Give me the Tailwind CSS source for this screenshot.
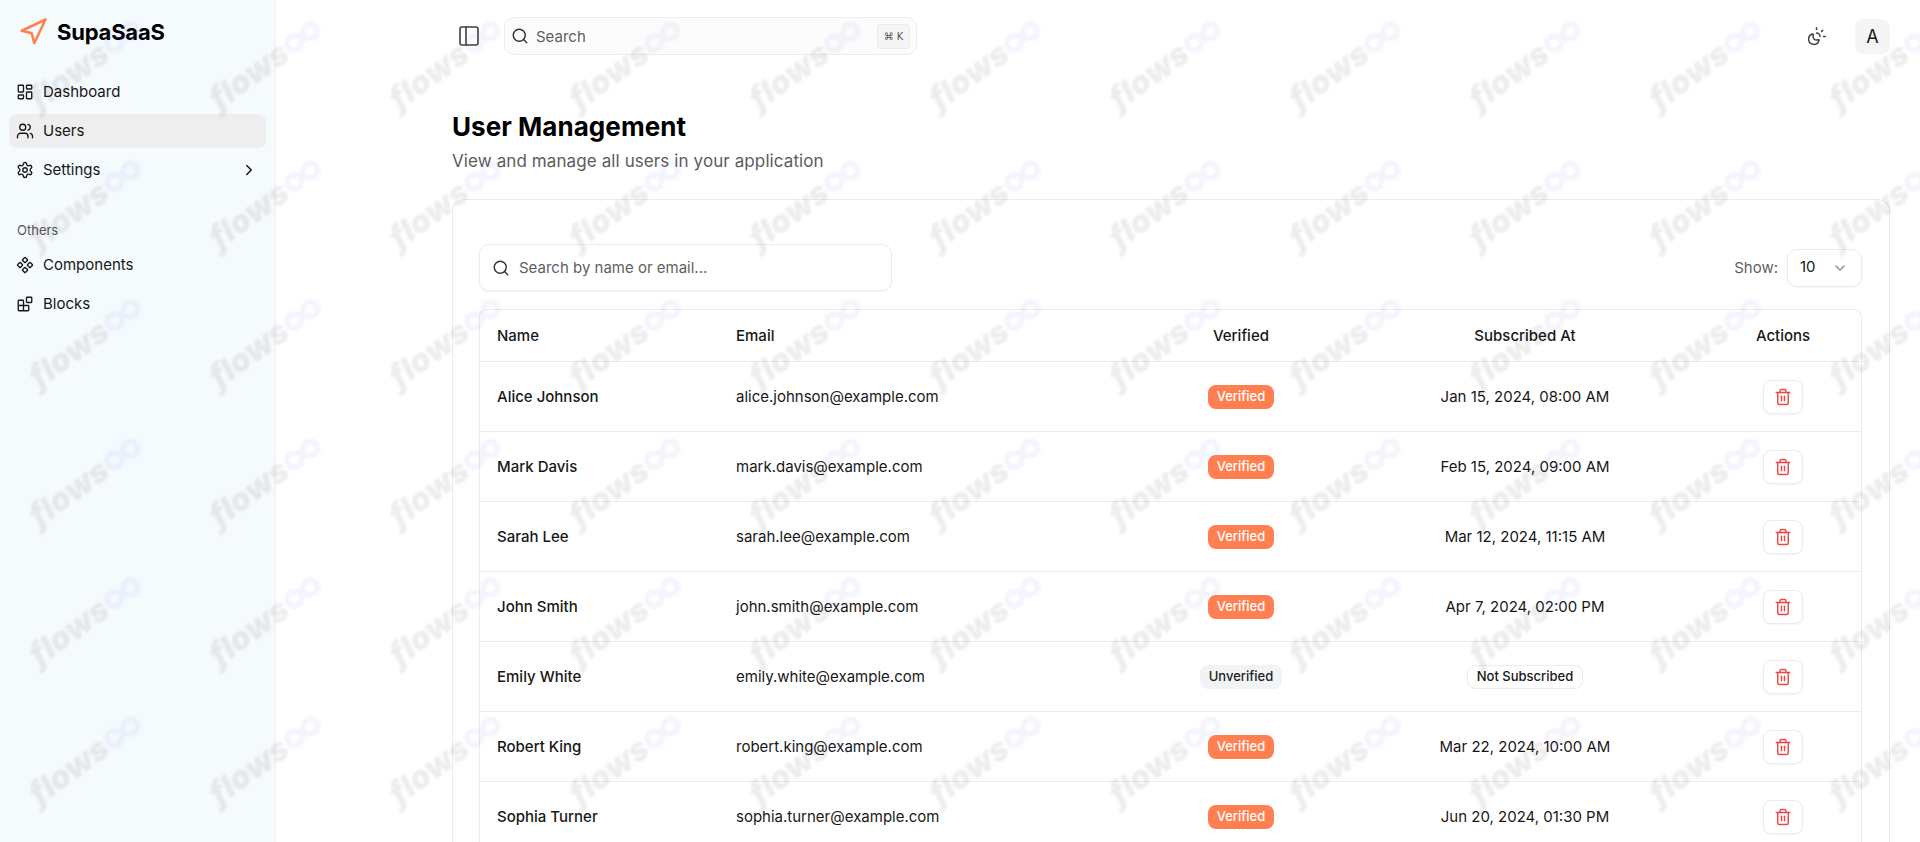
<!doctype html>
<html lang="en">
<head>
<meta charset="utf-8">
<title>SupaSaaS</title>
<script src="https://cdn.jsdelivr.net/npm/@tailwindcss/browser@4"></script>
</head>
<body class="bg-white">
<div class="relative flex h-[842px] w-[1920px] overflow-hidden bg-white font-['Inter',sans-serif] text-[#171717]">

  <aside class="flex w-[276px] shrink-0 flex-col border-r border-[#edf0f5] bg-[#f5fafd] px-[9px]">
    <div class="flex h-[64px] items-center gap-[9px] pl-[9px]">
      <svg class="size-[30px] text-[#ff7f50]" viewBox="0 0 24 24" fill="none" stroke="currentColor" stroke-width="2" stroke-linecap="round" stroke-linejoin="round"><polygon points="3 11 22 2 13 21 11 13 3 11"/></svg>
      <span class="text-[22px] leading-none font-bold tracking-[-0.2px] text-black">SupaSaaS</span>
    </div>
    <nav class="mt-[11px] flex flex-col gap-[5px] text-[15px]">
      <a class="flex h-[34px] items-center gap-[9px] rounded-lg pl-[7px]">
        <svg class="size-[18px]" viewBox="0 0 24 24" fill="none" stroke="currentColor" stroke-width="1.8" stroke-linecap="round" stroke-linejoin="round"><rect width="7" height="9" x="3" y="3" rx="1"/><rect width="7" height="5" x="14" y="3" rx="1"/><rect width="7" height="9" x="14" y="12" rx="1"/><rect width="7" height="5" x="3" y="16" rx="1"/></svg>
        Dashboard
      </a>
      <a class="flex h-[34px] items-center gap-[9px] rounded-lg bg-[#eeeeee] pl-[7px]">
        <svg class="size-[18px]" viewBox="0 0 24 24" fill="none" stroke="currentColor" stroke-width="1.8" stroke-linecap="round" stroke-linejoin="round"><path d="M16 21v-2a4 4 0 0 0-4-4H6a4 4 0 0 0-4 4v2"/><circle cx="9" cy="7" r="4"/><path d="M22 21v-2a4 4 0 0 0-3-3.87"/><path d="M16 3.13a4 4 0 0 1 0 7.75"/></svg>
        Users
      </a>
      <a class="flex h-[34px] items-center gap-[9px] rounded-lg pl-[7px] pr-[8px]">
        <svg class="size-[18px]" viewBox="0 0 24 24" fill="none" stroke="currentColor" stroke-width="1.8" stroke-linecap="round" stroke-linejoin="round"><path d="M12.22 2h-.44a2 2 0 0 0-2 2v.18a2 2 0 0 1-1 1.73l-.43.25a2 2 0 0 1-2 0l-.15-.08a2 2 0 0 0-2.73.73l-.22.38a2 2 0 0 0 .73 2.73l.15.1a2 2 0 0 1 1 1.72v.51a2 2 0 0 1-1 1.74l-.15.09a2 2 0 0 0-.73 2.73l.22.38a2 2 0 0 0 2.73.73l.15-.08a2 2 0 0 1 2 0l.43.25a2 2 0 0 1 1 1.73V20a2 2 0 0 0 2 2h.44a2 2 0 0 0 2-2v-.18a2 2 0 0 1 1-1.73l.43-.25a2 2 0 0 1 2 0l.15.08a2 2 0 0 0 2.73-.73l.22-.39a2 2 0 0 0-.73-2.73l-.15-.08a2 2 0 0 1-1-1.74v-.5a2 2 0 0 1 1-1.74l.15-.09a2 2 0 0 0 .73-2.73l-.22-.38a2 2 0 0 0-2.73-.73l-.15.08a2 2 0 0 1-2 0l-.43-.25a2 2 0 0 1-1-1.73V4a2 2 0 0 0-2-2z"/><circle cx="12" cy="12" r="3"/></svg>
        Settings
        <svg class="ml-auto size-[18px]" viewBox="0 0 24 24" fill="none" stroke="currentColor" stroke-width="2" stroke-linecap="round" stroke-linejoin="round"><path d="m9 18 6-6-6-6"/></svg>
      </a>
    </nav>
    <div class="mt-[35px] pl-[8px] text-[13px] leading-[16px] text-[#555555]">Others</div>
    <nav class="mt-[10px] flex flex-col gap-[5px] text-[15px]">
      <a class="flex h-[34px] items-center gap-[9px] rounded-lg pl-[7px]">
        <svg class="size-[18px]" viewBox="0 0 24 24" fill="none" stroke="currentColor" stroke-width="1.8" stroke-linecap="round" stroke-linejoin="round"><path d="M15.536 11.293a1 1 0 0 0 0 1.414l2.376 2.377a1 1 0 0 0 1.414 0l2.377-2.377a1 1 0 0 0 0-1.414l-2.377-2.377a1 1 0 0 0-1.414 0z"/><path d="M2.297 11.293a1 1 0 0 0 0 1.414l2.377 2.377a1 1 0 0 0 1.414 0l2.377-2.377a1 1 0 0 0 0-1.414L6.088 8.916a1 1 0 0 0-1.414 0z"/><path d="M8.916 17.912a1 1 0 0 0 0 1.415l2.377 2.376a1 1 0 0 0 1.414 0l2.377-2.376a1 1 0 0 0 0-1.415l-2.377-2.376a1 1 0 0 0-1.414 0z"/><path d="M8.916 4.674a1 1 0 0 0 0 1.414l2.377 2.376a1 1 0 0 0 1.414 0l2.377-2.376a1 1 0 0 0 0-1.414l-2.377-2.377a1 1 0 0 0-1.414 0z"/></svg>
        Components
      </a>
      <a class="flex h-[34px] items-center gap-[9px] rounded-lg pl-[7px]">
        <svg class="size-[18px]" viewBox="0 0 24 24" fill="none" stroke="currentColor" stroke-width="1.8" stroke-linecap="round" stroke-linejoin="round"><rect x="14" y="3" width="7" height="7" rx="1"/><path d="M10 21V8a1 1 0 0 0-1-1H4a1 1 0 0 0-1 1v12a1 1 0 0 0 1 1h12a1 1 0 0 0 1-1v-5a1 1 0 0 0-1-1H3"/></svg>
        Blocks
      </a>
    </nav>
  </aside>

  <main class="min-w-0 flex-1 pl-[176px] pr-[30px]">
    <header class="flex h-[72px] items-center">
      <button class="ml-[5px] flex size-[24px] items-center justify-center text-[#3f3f3f]">
        <svg class="size-[24px]" viewBox="0 0 24 24" fill="none" stroke="currentColor" stroke-width="1.6" stroke-linecap="round" stroke-linejoin="round"><rect width="18" height="18" x="3" y="3" rx="2"/><path d="M9 3v18"/></svg>
      </button>
      <div class="ml-[23px] flex h-[38px] w-[413px] items-center rounded-[10px] border border-[#ececec] bg-[#fcfcfc] pl-[6px] pr-[6px] text-[15px] text-[#5f5f5f]">
        <svg class="size-[18px]" viewBox="0 0 24 24" fill="none" stroke="#333333" stroke-width="1.9" stroke-linecap="round" stroke-linejoin="round"><circle cx="11" cy="11" r="8"/><path d="m21 21-4.3-4.3"/></svg>
        <span class="ml-[7px] pt-[2px]">Search</span>
        <span class="ml-auto flex h-[25px] w-[33px] items-center justify-center rounded-[4px] border border-[#ececec] bg-[#f5f5f5] font-['DejaVu_Sans',sans-serif] text-[10px] text-[#555555]">⌘ K</span>
      </div>
      <button class="ml-auto flex size-[24px] items-center justify-center text-[#3f3f3f]">
        <svg class="size-[21px]" viewBox="0 0 24 24" fill="none" stroke="currentColor" stroke-width="1.7" stroke-linecap="round" stroke-linejoin="round"><path d="M12 2v2"/><path d="M14.837 16.385a6 6 0 1 1-7.223-7.222c.624-.147.97.66.715 1.248a4 4 0 0 0 5.26 5.259c.589-.255 1.396.09 1.248.715"/><path d="M16 12a4 4 0 0 0-4-4"/><path d="m19 5-1.256 1.256"/><path d="M20 12h2"/></svg>
      </button>
      <div class="ml-[27px] flex size-[35px] items-center justify-center rounded-lg bg-[#f5f5f5] text-[18px] text-[#171717]">A</div>
    </header>

    <h1 class="mt-[38px] text-[26px] leading-[34px] font-bold tracking-[0.05px] text-black">User Management</h1>
    <p class="mt-[5px] text-[17px] leading-[24px] tracking-[0.1px] text-[#5c5c5c]">View and manage all users in your application</p>

    <section class="mt-[26px] rounded-t-xl border border-b-0 border-[#ececec] bg-white pl-[26px] pr-[27px] pt-[44px]">
      <div class="flex items-center justify-between">
        <div class="flex h-[47px] w-[413px] items-center rounded-[10px] border border-[#ececec] pl-[12px] text-[15px] text-[#5f5f5f] shadow-xs">
          <svg class="size-[18px]" viewBox="0 0 24 24" fill="none" stroke="#333333" stroke-width="1.9" stroke-linecap="round" stroke-linejoin="round"><circle cx="11" cy="11" r="8"/><path d="m21 21-4.3-4.3"/></svg>
          <span class="ml-[9px] pt-[1px]">Search by name or email...</span>
        </div>
        <div class="flex items-center gap-[9px]">
          <span class="pt-[1px] text-[15px] text-[#5f5f5f]">Show:</span>
          <div class="flex h-[38px] w-[75px] items-center justify-between rounded-[10px] border border-[#ececec] pl-[12px] pr-[13px] text-[15px] shadow-xs">
            10
            <svg class="size-[16px] text-[#8a8a8a]" viewBox="0 0 24 24" fill="none" stroke="currentColor" stroke-width="2" stroke-linecap="round" stroke-linejoin="round"><path d="m6 9 6 6 6-6"/></svg>
          </div>
        </div>
      </div>

      <div class="mt-[18px] rounded-t-lg border border-b-0 border-[#ececec]">
        <table class="w-full table-fixed border-collapse text-[15px]">
          <colgroup><col class="w-[239px]"><col class="w-[417px]"><col class="w-[210px]"><col class="w-[358px]"><col class="w-[158px]"></colgroup>
          <thead class="[&_th]:pt-[2px]">
            <tr class="h-[51px] border-b border-[#ececec]">
              <th class="pl-[17px] text-left font-medium">Name</th>
              <th class="pl-[17px] text-left font-medium">Email</th>
              <th class="text-center font-medium">Verified</th>
              <th class="text-center font-medium">Subscribed At</th>
              <th class="text-center font-medium">Actions</th>
            </tr>
          </thead>
          <tbody class="[&_td]:pt-[2px]">
            <tr class="h-[70px] border-b border-[#ececec]">
              <td class="pl-[17px] font-medium">Alice Johnson</td>
              <td class="pl-[17px]">alice.johnson@example.com</td>
              <td class="text-center"><span class="inline-flex h-[24px] items-center rounded-lg bg-[#ff7f50] px-[9px] text-[13px] font-medium text-white">Verified</span></td>
              <td class="text-center">Jan 15, 2024, 08:00 AM</td>
              <td><button class="mx-auto flex h-[34px] w-[40px] items-center justify-center rounded-lg border border-[#ececec] bg-white shadow-xs"><svg class="size-[18px] text-[#ef4444]" viewBox="0 0 24 24" fill="none" stroke="currentColor" stroke-width="1.9" stroke-linecap="round" stroke-linejoin="round"><path d="M3 6h18"/><path d="M19 6v14c0 1-1 2-2 2H7c-1 0-2-1-2-2V6"/><path d="M8 6V4c0-1 1-2 2-2h4c1 0 2 1 2 2v2"/><line x1="10" x2="10" y1="11" y2="17"/><line x1="14" x2="14" y1="11" y2="17"/></svg></button></td>
            </tr>
            <tr class="h-[70px] border-b border-[#ececec]">
              <td class="pl-[17px] font-medium">Mark Davis</td>
              <td class="pl-[17px]">mark.davis@example.com</td>
              <td class="text-center"><span class="inline-flex h-[24px] items-center rounded-lg bg-[#ff7f50] px-[9px] text-[13px] font-medium text-white">Verified</span></td>
              <td class="text-center">Feb 15, 2024, 09:00 AM</td>
              <td><button class="mx-auto flex h-[34px] w-[40px] items-center justify-center rounded-lg border border-[#ececec] bg-white shadow-xs"><svg class="size-[18px] text-[#ef4444]" viewBox="0 0 24 24" fill="none" stroke="currentColor" stroke-width="1.9" stroke-linecap="round" stroke-linejoin="round"><path d="M3 6h18"/><path d="M19 6v14c0 1-1 2-2 2H7c-1 0-2-1-2-2V6"/><path d="M8 6V4c0-1 1-2 2-2h4c1 0 2 1 2 2v2"/><line x1="10" x2="10" y1="11" y2="17"/><line x1="14" x2="14" y1="11" y2="17"/></svg></button></td>
            </tr>
            <tr class="h-[70px] border-b border-[#ececec]">
              <td class="pl-[17px] font-medium">Sarah Lee</td>
              <td class="pl-[17px]">sarah.lee@example.com</td>
              <td class="text-center"><span class="inline-flex h-[24px] items-center rounded-lg bg-[#ff7f50] px-[9px] text-[13px] font-medium text-white">Verified</span></td>
              <td class="text-center">Mar 12, 2024, 11:15 AM</td>
              <td><button class="mx-auto flex h-[34px] w-[40px] items-center justify-center rounded-lg border border-[#ececec] bg-white shadow-xs"><svg class="size-[18px] text-[#ef4444]" viewBox="0 0 24 24" fill="none" stroke="currentColor" stroke-width="1.9" stroke-linecap="round" stroke-linejoin="round"><path d="M3 6h18"/><path d="M19 6v14c0 1-1 2-2 2H7c-1 0-2-1-2-2V6"/><path d="M8 6V4c0-1 1-2 2-2h4c1 0 2 1 2 2v2"/><line x1="10" x2="10" y1="11" y2="17"/><line x1="14" x2="14" y1="11" y2="17"/></svg></button></td>
            </tr>
            <tr class="h-[70px] border-b border-[#ececec]">
              <td class="pl-[17px] font-medium">John Smith</td>
              <td class="pl-[17px]">john.smith@example.com</td>
              <td class="text-center"><span class="inline-flex h-[24px] items-center rounded-lg bg-[#ff7f50] px-[9px] text-[13px] font-medium text-white">Verified</span></td>
              <td class="text-center">Apr 7, 2024, 02:00 PM</td>
              <td><button class="mx-auto flex h-[34px] w-[40px] items-center justify-center rounded-lg border border-[#ececec] bg-white shadow-xs"><svg class="size-[18px] text-[#ef4444]" viewBox="0 0 24 24" fill="none" stroke="currentColor" stroke-width="1.9" stroke-linecap="round" stroke-linejoin="round"><path d="M3 6h18"/><path d="M19 6v14c0 1-1 2-2 2H7c-1 0-2-1-2-2V6"/><path d="M8 6V4c0-1 1-2 2-2h4c1 0 2 1 2 2v2"/><line x1="10" x2="10" y1="11" y2="17"/><line x1="14" x2="14" y1="11" y2="17"/></svg></button></td>
            </tr>
            <tr class="h-[70px] border-b border-[#ececec]">
              <td class="pl-[17px] font-medium">Emily White</td>
              <td class="pl-[17px]">emily.white@example.com</td>
              <td class="text-center"><span class="inline-flex h-[24px] items-center rounded-lg bg-[#f1f3f5] px-[9px] text-[13px] font-medium text-[#222222]">Unverified</span></td>
              <td class="text-center"><span class="inline-flex h-[24px] items-center rounded-lg border border-[#ececec] px-[9px] text-[13px] font-medium">Not Subscribed</span></td>
              <td><button class="mx-auto flex h-[34px] w-[40px] items-center justify-center rounded-lg border border-[#ececec] bg-white shadow-xs"><svg class="size-[18px] text-[#ef4444]" viewBox="0 0 24 24" fill="none" stroke="currentColor" stroke-width="1.9" stroke-linecap="round" stroke-linejoin="round"><path d="M3 6h18"/><path d="M19 6v14c0 1-1 2-2 2H7c-1 0-2-1-2-2V6"/><path d="M8 6V4c0-1 1-2 2-2h4c1 0 2 1 2 2v2"/><line x1="10" x2="10" y1="11" y2="17"/><line x1="14" x2="14" y1="11" y2="17"/></svg></button></td>
            </tr>
            <tr class="h-[70px] border-b border-[#ececec]">
              <td class="pl-[17px] font-medium">Robert King</td>
              <td class="pl-[17px]">robert.king@example.com</td>
              <td class="text-center"><span class="inline-flex h-[24px] items-center rounded-lg bg-[#ff7f50] px-[9px] text-[13px] font-medium text-white">Verified</span></td>
              <td class="text-center">Mar 22, 2024, 10:00 AM</td>
              <td><button class="mx-auto flex h-[34px] w-[40px] items-center justify-center rounded-lg border border-[#ececec] bg-white shadow-xs"><svg class="size-[18px] text-[#ef4444]" viewBox="0 0 24 24" fill="none" stroke="currentColor" stroke-width="1.9" stroke-linecap="round" stroke-linejoin="round"><path d="M3 6h18"/><path d="M19 6v14c0 1-1 2-2 2H7c-1 0-2-1-2-2V6"/><path d="M8 6V4c0-1 1-2 2-2h4c1 0 2 1 2 2v2"/><line x1="10" x2="10" y1="11" y2="17"/><line x1="14" x2="14" y1="11" y2="17"/></svg></button></td>
            </tr>
            <tr class="h-[70px] border-b border-[#ececec]">
              <td class="pl-[17px] font-medium">Sophia Turner</td>
              <td class="pl-[17px]">sophia.turner@example.com</td>
              <td class="text-center"><span class="inline-flex h-[24px] items-center rounded-lg bg-[#ff7f50] px-[9px] text-[13px] font-medium text-white">Verified</span></td>
              <td class="text-center">Jun 20, 2024, 01:30 PM</td>
              <td><button class="mx-auto flex h-[34px] w-[40px] items-center justify-center rounded-lg border border-[#ececec] bg-white shadow-xs"><svg class="size-[18px] text-[#ef4444]" viewBox="0 0 24 24" fill="none" stroke="currentColor" stroke-width="1.9" stroke-linecap="round" stroke-linejoin="round"><path d="M3 6h18"/><path d="M19 6v14c0 1-1 2-2 2H7c-1 0-2-1-2-2V6"/><path d="M8 6V4c0-1 1-2 2-2h4c1 0 2 1 2 2v2"/><line x1="10" x2="10" y1="11" y2="17"/><line x1="14" x2="14" y1="11" y2="17"/></svg></button></td>
            </tr>
          </tbody>
        </table>
      </div>
    </section>
  </main>

  <!-- repeated watermark laid over the whole page -->
  <div id="wm" class="pointer-events-none absolute top-[-6px] left-[-4px] grid w-[2160px] grid-cols-[repeat(12,180px)] auto-rows-[139px]">
    <div class="flex items-center justify-center">
      <div class="flex rotate-[-36deg] items-center blur-[0.8px]">
        <span class="font-['Inter',sans-serif] text-[32px] leading-none font-black text-black/[0.07] italic">flows</span>
        <svg class="ml-[1px] h-[20px] w-[40px]" viewBox="0 0 44 22" fill="none" stroke="#6366f1" stroke-opacity="0.07" stroke-width="6"><path d="M22 11c-4-5-7-8-11-8a8 8 0 0 0 0 16c4 0 7-3 11-8s7-8 11-8a8 8 0 0 1 0 16c-4 0-7-3-11-8z"/></svg>
      </div>
    </div>
  </div>
</div>
<script>
  var wm = document.getElementById('wm');
  var cell = wm.firstElementChild;
  for (var i = 1; i < 84; i++) wm.appendChild(cell.cloneNode(true));
</script>
</body>
</html>
